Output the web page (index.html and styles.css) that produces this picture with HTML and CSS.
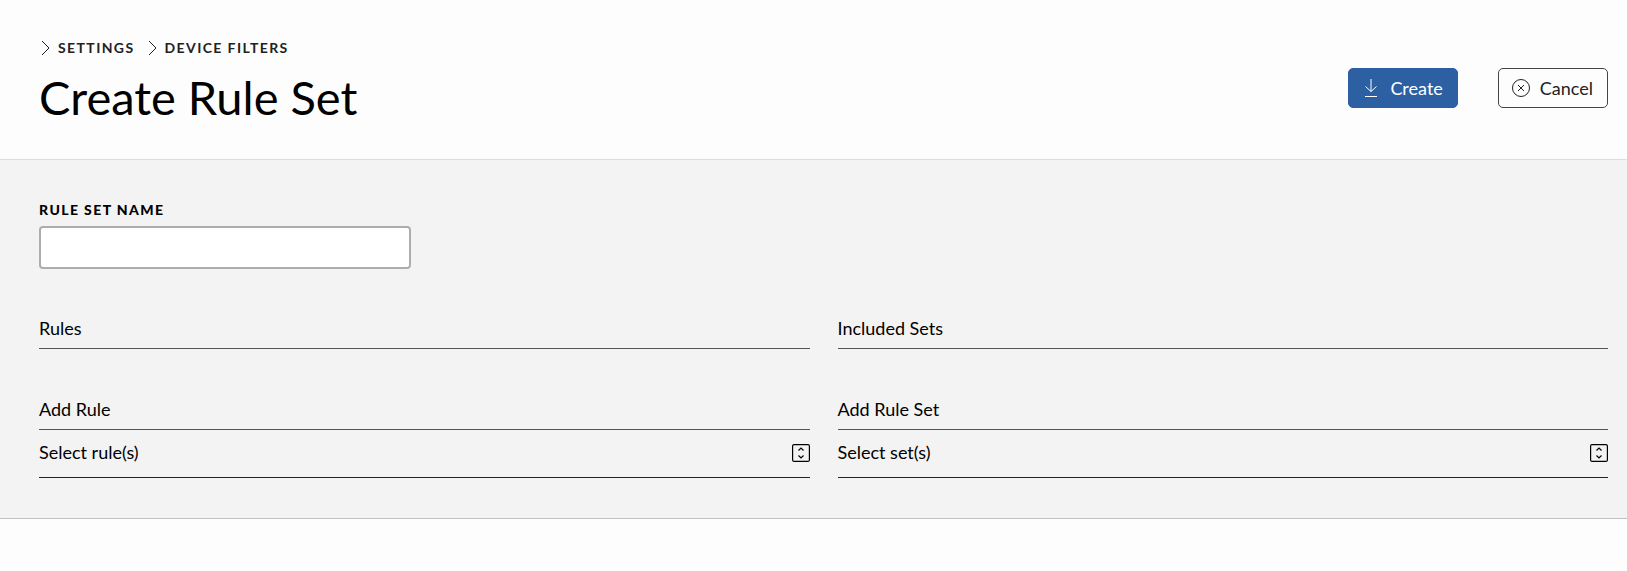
FILE: index.html
```html
<!DOCTYPE html>
<html lang="en">
<head>
    <meta charset="UTF-8">
    <meta name="viewport" content="width=device-width, initial-scale=1.0">
    <title>Create Rule Set</title>
    <link rel="stylesheet" href="styles.css">
</head>
<body>
    <header class="page-header">
        <div class="heading">
            <nav class="breadcrumbs" aria-label="Breadcrumb">
                <a href="#settings">
                    <svg class="chevron" viewBox="0 0 12 16"><path d="M3 1l7 7-7 7"/></svg>
                    Settings
                </a>
                <a href="#device-filters">
                    <svg class="chevron" viewBox="0 0 12 16"><path d="M3 1l7 7-7 7"/></svg>
                    Device Filters
                </a>
            </nav>
            <h1>Create Rule Set</h1>
        </div>
        <div class="actions">
            <button type="submit" form="rule-set-form" class="btn btn-primary">
                <svg class="icon" viewBox="0 0 20 20"><path d="M10 1v12.500M4.500 8.500l5.500 5 5.500-5M4 18.500h12"/></svg>
                Create
            </button>
            <button type="button" class="btn">
                <svg class="icon" viewBox="0 0 20 20"><circle cx="10" cy="10" r="8.500"/><path d="M7 7l6 6M13 7l-6 6"/></svg>
                Cancel
            </button>
        </div>
    </header>

    <main>
        <form id="rule-set-form" class="rule-form">
            <div class="field">
                <label for="rule-set-name">Rule Set Name</label>
                <input type="text" id="rule-set-name" name="name">
            </div>

            <div class="columns">
                <section>
                    <h2>Rules</h2>
                    <label class="section-title" for="rules">Add Rule</label>
                    <div class="select-box">
                        <select id="rules" name="rules">
                            <option>Select rule(s)</option>
                        </select>
                        <svg class="toggle" viewBox="0 0 18 18"><rect x="0.600" y="0.600" width="16.800" height="16.800" rx="1.500"/><path d="M6.500 6.500l2.500-2.500 2.500 2.500M6.500 11.500l2.500 2.500 2.500-2.500"/></svg>
                    </div>
                </section>
                <section>
                    <h2>Included Sets</h2>
                    <label class="section-title" for="sets">Add Rule Set</label>
                    <div class="select-box">
                        <select id="sets" name="sets">
                            <option>Select set(s)</option>
                        </select>
                        <svg class="toggle" viewBox="0 0 18 18"><rect x="0.600" y="0.600" width="16.800" height="16.800" rx="1.500"/><path d="M6.500 6.500l2.500-2.500 2.500 2.500M6.500 11.500l2.500 2.500 2.500-2.500"/></svg>
                    </div>
                </section>
            </div>
        </form>
    </main>
</body>
</html>
```
FILE: styles.css
```css
* {
    box-sizing: border-box;
}

body {
    margin: 0;
    background-color: #fdfdfd;
    color: #000;
    font-family: Lato, sans-serif;
    font-size: 18px;
    line-height: 24px;
}

svg {
    fill: none;
    stroke: currentColor;
    flex-shrink: 0;
}

.page-header {
    display: flex;
    justify-content: space-between;
    align-items: flex-start;
    padding: 38px 19px 32px 39px;
    border-bottom: 1px solid #dedede;
}

.breadcrumbs {
    display: flex;
    gap: 11px;
}

.breadcrumbs a {
    display: flex;
    align-items: center;
    gap: 7px;
    color: #222;
    font-size: 14px;
    font-weight: 700;
    line-height: 20px;
    letter-spacing: 0.1em;
    text-transform: uppercase;
    text-decoration: none;
}

.chevron {
    width: 12px;
    height: 16px;
}

h1 {
    margin: 9px 0 0;
    font-size: 47px;
    font-weight: 400;
    line-height: 60px;
}

.actions {
    display: flex;
    align-items: center;
    gap: 40px;
    margin-top: 30px;
}

.btn {
    display: flex;
    align-items: center;
    gap: 9px;
    padding: 7px 14px 7px 12px;
    border: 1px solid #444;
    border-radius: 5px;
    background-color: #fdfdfd;
    color: #222;
    font-family: inherit;
    font-size: 18px;
    line-height: 24px;
    cursor: pointer;
}

.btn-primary {
    border-color: #2d60a3;
    background-color: #2d60a3;
    color: #fff;
}

.icon {
    width: 20px;
    height: 20px;
}

.rule-form {
    padding: 40px 19px 40px 39px;
    border-bottom: 1px solid #c0c0c0;
    background-color: #f3f3f3;
}

.field {
    display: flex;
    flex-direction: column;
    gap: 6px;
    max-width: 372px;
}

.field label {
    font-size: 14px;
    font-weight: 900;
    line-height: 20px;
    letter-spacing: 0.1em;
    text-transform: uppercase;
}

.field input {
    height: 43px;
    padding: 0 12px;
    border: 2px solid #adadad;
    border-radius: 4px;
    background-color: #fff;
    font: inherit;
}

.columns {
    display: grid;
    grid-template-columns: 1fr 1fr;
    gap: 28px;
    margin-top: 47px;
}

h2,
.section-title {
    display: block;
    margin: 0;
    padding-bottom: 8px;
    border-bottom: 1px solid #555;
    font-size: 18px;
    font-weight: 400;
    line-height: 24px;
}

.section-title {
    margin-top: 48px;
}

.select-box {
    position: relative;
}

.select-box select {
    display: block;
    width: 100%;
    padding: 10px 28px 13px 0;
    border: 0;
    border-bottom: 1px solid #222;
    border-radius: 0;
    background: none;
    color: inherit;
    font: inherit;
    appearance: none;
}

.toggle {
    position: absolute;
    top: 14px;
    right: 0;
    width: 18px;
    height: 18px;
    stroke-width: 1.2;
    pointer-events: none;
}
```
